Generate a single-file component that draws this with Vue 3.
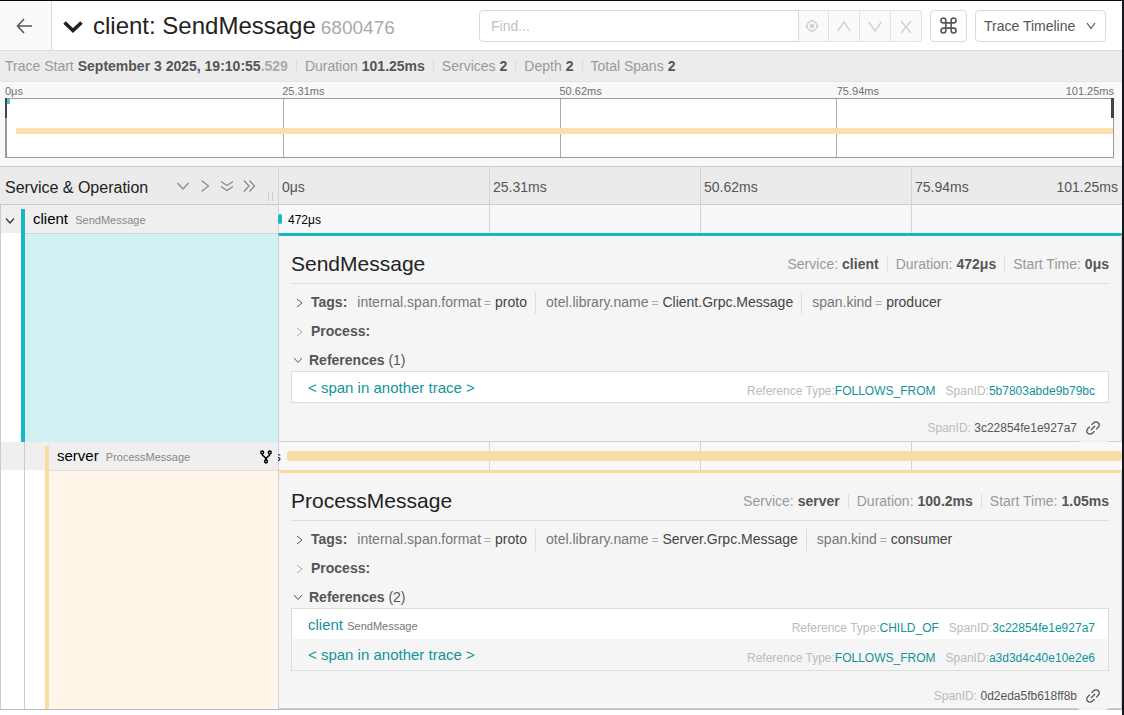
<script setup>
import { ref } from 'vue'

const query = ref('')
const view = ref('Trace Timeline')

const ticks = ['0μs', '25.31ms', '50.62ms', '75.94ms']
const traceEnd = '101.25ms'

const summary = [
  { label: 'Trace Start', value: 'September 3 2025, 19:10:55', faded: '.529' },
  { label: 'Duration', value: '101.25ms' },
  { label: 'Services', value: '2' },
  { label: 'Depth', value: '2' },
  { label: 'Total Spans', value: '2' },
]

const spans = [
  {
    id: '3c22854fe1e927a7',
    theme: 'teal',
    depth: 0,
    service: 'client',
    operation: 'SendMessage',
    duration: '472μs',
    start: '0μs',
    left: 0,
    width: 0.47,
    tags: [
      ['internal.span.format', 'proto'],
      ['otel.library.name', 'Client.Grpc.Message'],
      ['span.kind', 'producer'],
    ],
    references: [{ type: 'FOLLOWS_FROM', spanId: '5b7803abde9b79bc' }],
  },
  {
    id: '0d2eda5fb618ff8b',
    theme: 'sand',
    depth: 1,
    service: 'server',
    operation: 'ProcessMessage',
    duration: '100.2ms',
    start: '1.05ms',
    left: 1.04,
    width: 98.96,
    tags: [
      ['internal.span.format', 'proto'],
      ['otel.library.name', 'Server.Grpc.Message'],
      ['span.kind', 'consumer'],
    ],
    references: [
      { type: 'CHILD_OF', spanId: '3c22854fe1e927a7', service: 'client', operation: 'SendMessage' },
      { type: 'FOLLOWS_FROM', spanId: 'a3d3d4c40e10e2e6' },
    ],
  },
]
</script>

<template>
  <div class="page">
    <header class="topbar">
      <a class="back" href="#" aria-label="Back">
        <svg width="16" height="16" viewBox="0 0 16 16"><path d="M8 1 1.5 8 8 15M1.5 8H16" /></svg>
      </a>
      <h1 class="title">
        <svg width="20" height="14" viewBox="0 0 20 14"><path d="M1.5 2.5 10 10.5l8.500-8" /></svg>
        <span>client: SendMessage</span>
        <small>6800476</small>
      </h1>
      <div class="search">
        <input v-model="query" type="text" placeholder="Find..." aria-label="Find" />
        <button type="button" disabled aria-label="Locate">
          <svg width="14" height="14" viewBox="0 0 14 14"><circle cx="7" cy="7" r="5" /><circle class="dot" cx="7" cy="7" r="2.300" /><path d="M7 .5v2M7 11.500v2M.5 7h2M11.500 7h2" /></svg>
        </button>
        <button type="button" disabled aria-label="Previous">
          <svg width="14" height="14" viewBox="0 0 14 14"><path d="M.7 12 7 3l6.300 9" /></svg>
        </button>
        <button type="button" disabled aria-label="Next">
          <svg width="14" height="14" viewBox="0 0 14 14"><path d="M.7 3 7 12l6.300-9" /></svg>
        </button>
        <button type="button" disabled aria-label="Clear">
          <svg width="14" height="14" viewBox="0 0 14 14"><path d="m2 2 10 12M12 2 2 14" /></svg>
        </button>
      </div>
      <button class="shortcuts" type="button" aria-label="Keyboard shortcuts">
        <svg width="17" height="17" viewBox="0 0 16 16"><path d="M5.500 5.500V3.200A2.300 2.300 0 1 0 3.200 5.500H12.800A2.300 2.300 0 1 0 10.500 3.200V12.800A2.300 2.300 0 1 0 12.800 10.500H3.200A2.300 2.300 0 1 0 5.500 12.800Z" /></svg>
      </button>
      <div class="view">
        <select v-model="view" aria-label="View">
          <option>Trace Timeline</option>
        </select>
        <svg width="10" height="8" viewBox="0 0 10 8"><path d="m1 1 4 5.500L9 1" /></svg>
      </div>
    </header>

    <ul class="summary facts">
      <li v-for="item in summary" :key="item.label">
        {{ item.label }} <strong>{{ item.value }}<i v-if="item.faded">{{ item.faded }}</i></strong>
      </li>
    </ul>

    <section class="minimap">
      <div class="mini-ticks">
        <span v-for="t in ticks" :key="t">{{ t }}</span>
        <span class="end">{{ traceEnd }}</span>
      </div>
      <div class="canvas">
        <i v-for="t in ticks" :key="t" class="cell"></i>
        <i class="mini-span teal"></i>
        <i class="mini-span sand"></i>
        <i class="handle start"></i>
        <i class="handle stop"></i>
      </div>
    </section>

    <main class="timeline">
      <div class="row heading">
        <div class="name-col">
          <h2>Service &amp; Operation</h2>
          <div class="expanders">
            <button type="button" aria-label="Expand one level"><svg width="14" height="14" viewBox="0 0 14 14"><path d="m1.500 4 5.500 6 5.500-6" /></svg></button>
            <button type="button" aria-label="Collapse one level"><svg width="14" height="14" viewBox="0 0 14 14"><path d="m3.500 1.500 7 5.500-7 5.500" /></svg></button>
            <button type="button" aria-label="Expand all"><svg width="14" height="14" viewBox="0 0 14 14"><path d="m1 2.500 6 4 6-4M1 7.500l6 4 6-4" /></svg></button>
            <button type="button" aria-label="Collapse all"><svg width="14" height="14" viewBox="0 0 14 14"><path d="m2 1.500 5 5.500-5 5.500M7.500 1.500l5 5.500-5 5.500" /></svg></button>
          </div>
          <i class="grip"></i>
        </div>
        <div class="time-col">
          <span v-for="t in ticks" :key="t" class="cell">{{ t }}</span>
          <span class="end">{{ traceEnd }}</span>
        </div>
      </div>

      <template v-for="s in spans" :key="s.id">
        <div class="row span-row" :class="s.theme">
          <div class="name-col">
            <i v-if="s.depth" class="guide"></i>
            <button class="toggle" type="button" aria-label="Toggle children">
              <svg v-if="!s.depth" width="10" height="8" viewBox="0 0 10 8"><path d="m1 1.500 4 4.500 4-4.500" /></svg>
            </button>
            <a class="span-name" href="#">{{ s.service }} <small>{{ s.operation }}</small></a>
            <svg v-if="s.depth" class="fork" width="12" height="14" viewBox="0 0 12 14">
              <circle cx="2.200" cy="2.500" r="1.400" /><circle cx="9.800" cy="2.500" r="1.400" /><circle cx="6" cy="11.500" r="1.400" />
              <path d="M2.200 4c0 3 3.800 2 3.800 6 0-4 3.800-3 3.800-6" />
            </svg>
          </div>
          <div class="time-col">
            <i v-for="t in ticks" :key="t" class="cell"></i>
            <div class="bar" :style="{ left: s.left + '%', width: s.width + '%' }">
              <span :class="s.depth ? 'before' : 'after'">{{ s.duration }}</span>
            </div>
          </div>
        </div>

        <div class="row detail-row" :class="s.theme">
          <div class="name-col">
            <i v-if="s.depth" class="guide"></i>
            <div class="toggle"></div>
            <div class="tint"></div>
          </div>
          <article class="detail">
            <header>
              <h3>{{ s.operation }}</h3>
              <ul class="facts">
                <li>Service: <strong>{{ s.service }}</strong></li>
                <li>Duration: <strong>{{ s.duration }}</strong></li>
                <li>Start Time: <strong>{{ s.start }}</strong></li>
              </ul>
            </header>
            <div class="line">
              <svg width="8" height="10" viewBox="0 0 8 10"><path d="m1 1 5 4-5 4" /></svg>
              <strong>Tags:</strong>
              <ul class="tags">
                <li v-for="[k, v] in s.tags" :key="k">{{ k }}<i>=</i><b>{{ v }}</b></li>
              </ul>
            </div>
            <div class="line empty">
              <svg width="8" height="10" viewBox="0 0 8 10"><path d="m1 1 5 4-5 4" /></svg>
              <strong>Process:</strong>
            </div>
            <div class="line open">
              <svg width="10" height="8" viewBox="0 0 10 8"><path d="m1 1 4 4.500L9 1" /></svg>
              <strong>References</strong>&nbsp;({{ s.references.length }})
            </div>
            <ul class="refs">
              <li v-for="r in s.references" :key="r.spanId">
                <a class="target" href="#">
                  <template v-if="r.service">{{ r.service }} <small>{{ r.operation }}</small></template>
                  <template v-else>&lt; span in another trace &gt;</template>
                </a>
                <span class="meta">
                  <span>Reference Type:<a href="#">{{ r.type }}</a></span>
                  <span>SpanID:<a href="#">{{ r.spanId }}</a></span>
                </span>
              </li>
            </ul>
            <footer>
              <span>SpanID: <b>{{ s.id }}</b></span>
              <button type="button" aria-label="Copy link">
                <svg width="16" height="16" viewBox="64 64 896 896"><path d="M574 665.400a8.030 8.030 0 00-11.300 0L446.500 781.600c-53.800 53.800-144.600 59.500-204 0-59.500-59.500-53.800-150.200 0-204l116.200-116.200c3.100-3.100 3.100-8.200 0-11.300l-39.800-39.800a8.030 8.030 0 00-11.300 0L191.400 526.500c-84.600 84.600-84.600 221.500 0 306s221.500 84.600 306 0l116.200-116.200c3.100-3.100 3.100-8.200 0-11.300L574 665.400zm258.600-474c-84.600-84.600-221.500-84.600-306 0L410.300 307.600a8.030 8.030 0 000 11.300l39.700 39.700c3.100 3.100 8.200 3.100 11.300 0l116.200-116.200c53.800-53.800 144.600-59.500 204 0 59.500 59.500 53.800 150.200 0 204L665.300 562.600a8.030 8.030 0 000 11.300l39.800 39.800c3.100 3.100 8.200 3.100 11.300 0l116.200-116.200c84.500-84.600 84.500-221.500 0-306.100zM610.100 372.300a8.030 8.030 0 00-11.300 0L372.300 598.700a8.030 8.030 0 000 11.300l39.600 39.600c3.100 3.100 8.200 3.100 11.300 0l226.400-226.400c3.100-3.100 3.100-8.200 0-11.300l-39.500-39.600z" /></svg>
              </button>
            </footer>
          </article>
        </div>
      </template>
    </main>
  </div>
</template>

<style>
body {
  margin: 0;
  background: #fff;
}
</style>

<style scoped>
.page {
  box-sizing: border-box;
  min-height: 100vh;
  border-top: 1px solid #0b0b0f;
  border-right: 2px solid #15161a;
  font: 14px/20px "Liberation Sans", Arial, sans-serif;
  color: #555;
}
.page *,
.page *::before {
  box-sizing: border-box;
}
h1, h2, h3, ul {
  margin: 0;
  padding: 0;
  font-weight: 400;
  list-style: none;
}
i {
  font-style: normal;
}
a {
  color: #11939a;
  text-decoration: none;
}
button {
  display: flex;
  align-items: center;
  justify-content: center;
  padding: 0;
  border: 0;
  background: none;
  color: inherit;
  font: inherit;
}
svg {
  flex: none;
  fill: none;
  stroke: currentColor;
  stroke-width: 1.200;
}

/* top bar */
.topbar {
  display: flex;
  align-items: center;
  height: 50px;
  padding-right: 16px;
  border-bottom: 1px solid #ddd;
}
.back {
  display: flex;
  align-items: center;
  justify-content: center;
  align-self: stretch;
  width: 52px;
  padding-right: 3px;
  border-right: 1px solid #ddd;
  background: #fafafa;
  color: #555;
}
.back svg {
  stroke-width: 1.500;
}
.title {
  display: flex;
  align-items: baseline;
  flex: 1;
  padding: 2px 0 0 11px;
  color: #222;
  font-size: 24px;
  line-height: 32px;
}
.title svg {
  margin-right: 10px;
  stroke-width: 3.600;
}
.title small {
  margin-left: 5px;
  color: #aaa;
  font-size: 19px;
}
.search {
  display: flex;
  width: 443px;
  height: 32px;
}
.search input {
  flex: 1;
  min-width: 0;
  padding: 0 11px;
  border: 1px solid #d9d9d9;
  border-radius: 4px 0 0 4px;
  outline: 0;
  font: inherit;
}
.search input::placeholder {
  color: #bfbfbf;
}
.search button {
  width: 31px;
  border: 1px solid #e2e2e2;
  border-left: 0;
  background: #fafafa;
  color: #d0d0d0;
}
.search input + button {
  width: 30px;
  padding-right: 3px;
}
.search button:last-child {
  border-radius: 0 4px 4px 0;
}
.search svg {
  stroke-width: 1.400;
}
.search .dot {
  fill: currentColor;
  stroke: none;
}
.shortcuts {
  width: 37px;
  height: 32px;
  margin: 0 8px;
  border: 1px solid #d9d9d9;
  border-radius: 4px;
}
.shortcuts svg {
  stroke-width: 1.500;
}
.view {
  display: flex;
  position: relative;
  align-items: center;
  width: 131px;
}
.view select {
  width: 100%;
  height: 32px;
  padding: 0 8px;
  border: 1px solid #d9d9d9;
  border-radius: 4px;
  background: #fff;
  color: #555;
  font: inherit;
  appearance: none;
}
.view svg {
  position: absolute;
  right: 10px;
  pointer-events: none;
}

/* label and value lists split by thin rules */
.facts {
  display: flex;
  align-items: center;
  color: #999;
}
.facts li {
  display: flex;
  align-items: center;
  gap: 4px;
}
.facts li + li::before {
  content: "";
  width: 1px;
  height: 14px;
  margin: 0 4px 0 8px;
  background: #ddd;
}
.facts strong {
  color: #555;
}
.facts strong i {
  color: #aaa;
}
.summary {
  height: 31px;
  padding-left: 5px;
  border-bottom: 1px solid #e4e4e4;
  background: #ececec;
}

/* minimap */
.minimap {
  padding: 2px 8px 8px 5px;
  background: #f8f8f8;
}
.mini-ticks {
  display: flex;
  position: relative;
  font-size: 11px;
  line-height: 14px;
  color: #717171;
}
.mini-ticks span {
  flex: 1;
}
.mini-ticks .end,
.time-col .end {
  position: absolute;
  right: 0;
}
.canvas {
  display: flex;
  position: relative;
  height: 60px;
  border: 1px solid #999;
  border-left: 0;
  background: #fff;
}
.canvas .cell {
  flex: 1;
  border-left: 1px solid #aaa;
}
.canvas .cell:first-child {
  border-left: 2px solid #999;
}
.mini-span {
  position: absolute;
}
.mini-span.teal {
  left: 2px;
  top: 0;
  width: 3px;
  height: 5px;
  background: #4cc5cc;
}
.mini-span.sand {
  left: 1%;
  right: 0;
  top: 29px;
  height: 6px;
  background: #f9e0b0;
}
.handle {
  position: absolute;
  top: -1px;
  width: 2px;
  height: 20px;
  background: #444;
}
.handle.start {
  left: 0;
}
.handle.stop {
  right: -1px;
  width: 3px;
}

/* timeline */
.timeline {
  border-top: 1px solid #ccc;
  border-bottom: 1px solid #bbb;
}
.row {
  display: flex;
}
.name-col {
  display: flex;
  position: relative;
  flex: 0 0 278px;
}
.time-col {
  display: flex;
  position: relative;
  flex: 1;
}
.time-col .cell {
  flex: 1;
  border-left: 1px solid #d4d4d4;
}
.heading {
  height: 38px;
  border-bottom: 1px solid #ccc;
  background: #ebebeb;
  line-height: 40px;
}
.heading h2 {
  flex: 1;
  padding-left: 5px;
  color: #222;
  font-size: 16px;
  line-height: 42px;
}
.expanders {
  display: flex;
  gap: 8px;
  padding-right: 22px;
  color: #888;
}
.grip {
  position: absolute;
  right: 5px;
  bottom: 3px;
  width: 5px;
  height: 9px;
  border: 1px solid #ccc;
  border-width: 0 1px;
}
.heading .cell {
  padding-left: 3px;
}
.heading .end {
  right: 4px;
}

.teal {
  --accent: #17b8be;
  --tint: #d1f1f2;
}
.sand {
  --accent: #f8dca1;
  --tint: #fff6e9;
}
.span-row {
  height: 28px;
}
.span-row .name-col {
  border-left: 1px solid #ccc;
  background: #efefef;
}
.guide {
  width: 24px;
  border-right: 1px solid #ccc;
}
.toggle {
  width: 20px;
  padding: 3px 3px 0 0;
  color: #333;
}
.span-name {
  flex: 1;
  margin-top: 4px;
  padding-left: 8px;
  border-left: 4px solid var(--accent);
  color: #000;
  font-size: 15px;
}
.span-name small {
  margin-left: 3px;
  color: #888;
  font-size: 11px;
}
.fork {
  align-self: center;
  margin: 2px 6px 0 0;
  color: #000;
  stroke-width: 1.500;
}
.span-row .time-col {
  overflow: hidden;
  background: #f8f8f8;
}
.bar {
  position: absolute;
  top: 9px;
  height: 10px;
  border-radius: 3px;
  background: var(--accent);
}
.bar span {
  position: absolute;
  color: #000;
  font-size: 12px;
  line-height: 12px;
}
.bar .after {
  left: 100%;
  padding-left: 6px;
}
.bar .before {
  right: 100%;
  padding-right: 6px;
}

.detail-row .name-col {
  border-left: 1px solid #ccc;
}
.tint {
  flex: 1;
  border-left: 4px solid var(--accent);
  background: linear-gradient(#c8d8d6, #c8d8d6) top / 100% 1px no-repeat var(--tint);
}
.sand .tint {
  background: linear-gradient(#ddd, #ddd) top / 100% 1px no-repeat var(--tint);
}
.detail {
  flex: 1;
  min-width: 0;
  padding: 0 12px;
  border: 1px solid #d0d0d0;
  border-top: 3px solid var(--accent);
  background: #f5f5f5;
}
.detail header {
  display: flex;
  align-items: center;
  justify-content: space-between;
  height: 48px;
  margin-bottom: 4px;
  padding-top: 9px;
  border-bottom: 1px solid #ddd;
}
.detail h3 {
  color: #222;
  font-size: 21px;
}
.line {
  display: flex;
  align-items: center;
  height: 29px;
  padding-left: 5px;
  line-height: 21px;
}
.line svg {
  margin-right: 7px;
  stroke-width: 1;
}
.line.empty svg {
  color: #aaa;
}
.line.open {
  height: 25px;
  padding: 4px 0 0 2px;
}
.line.open svg {
  margin-right: 6px;
}
.tags {
  display: flex;
  margin-left: 10px;
  color: #777;
}
.tags li + li {
  margin-left: 8px;
  padding-left: 10px;
  border-left: 1px solid #ddd;
}
.tags i {
  margin: 0 4px 0 3px;
  color: #aaa;
  font-size: 12px;
}
.tags b {
  color: #444;
  font-weight: 400;
}
.refs {
  border: 1px solid #ddd;
}
.refs li {
  display: flex;
  justify-content: space-between;
  height: 30px;
  padding: 0 13px 0 16px;
  background: #fff;
}
.refs li:nth-child(even) {
  height: 31px;
  background: #f5f5f5;
}
.target {
  padding-top: 2px;
  font-size: 15px;
  line-height: 28px;
}
.target small {
  color: #777;
  font-size: 11px;
}
.meta {
  display: flex;
  gap: 10px;
  padding-top: 6px;
  color: #bbb;
  font-size: 12px;
  line-height: 26px;
}
footer {
  display: flex;
  align-items: center;
  justify-content: flex-end;
  height: 38px;
  padding-top: 12px;
  color: #bbb;
  font-size: 12px;
}
.sand footer {
  height: 37px;
}
footer b {
  color: #555;
  font-weight: 400;
}
footer button {
  width: 32px;
  height: 24px;
  border-radius: 4px;
  box-shadow: 0 2px 0 #f1f1f1;
  color: #555;
}
footer svg {
  fill: currentColor;
  stroke: none;
}
</style>
